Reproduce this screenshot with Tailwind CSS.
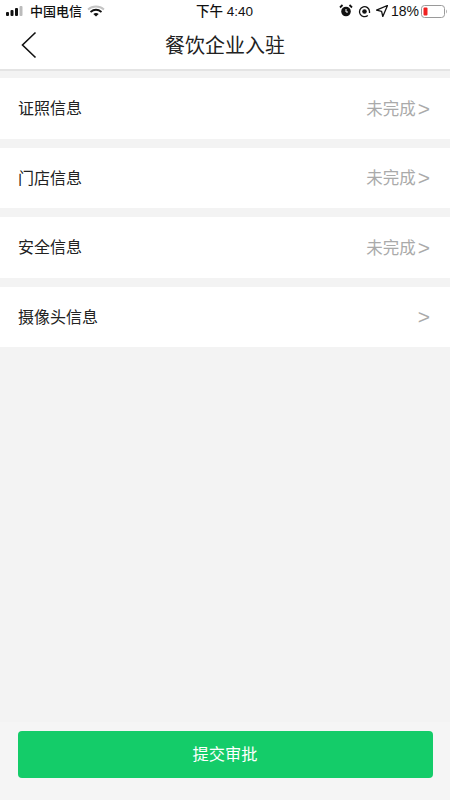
<!DOCTYPE html>
<html lang="zh-CN">
  <head>
    <meta charset="UTF-8" />
    <meta name="viewport" content="width=device-width, initial-scale=1.0" />
    <title>餐饮企业入驻</title>
    <script src="https://cdn.jsdelivr.net/npm/@tailwindcss/browser@4"></script>
  </head>
  <body class="bg-[#f3f3f3] font-['Liberation_Sans','Noto_Sans_CJK_SC',sans-serif]">
    <div class="w-[450px] h-[800px] flex flex-col overflow-hidden">
      <!-- status bar -->
      <div class="h-[22px] bg-white flex items-center justify-between pl-[6px] pr-[2px] text-[13px] leading-none text-[#111] font-medium relative">
        <div class="flex items-center">
          <svg width="20" height="12" viewBox="0 0 20 12">
            <rect x="0" y="7" width="3" height="4" rx="1" fill="#111" />
            <rect x="4.5" y="5" width="3" height="6" rx="1" fill="#111" />
            <rect x="9" y="3" width="3" height="8" rx="1" fill="#111" />
            <rect x="13.5" y="1" width="3" height="10" rx="1" fill="#bbb" />
          </svg>
          <span class="ml-[4px]">中国电信</span>
          <svg width="18" height="12" viewBox="0 0 18 12" class="ml-[5px]">
            <path d="M1 4.5C5.5 0.5 12.5 0.5 17 4.5" fill="none" stroke="#c4c4c4" stroke-width="1.8" />
            <path d="M3.5 7C7 4.2 11 4.2 14.5 7" fill="none" stroke="#111" stroke-width="1.8" />
            <path d="M6.3 9C8 7.8 10 7.8 11.7 9L9 11.6Z" fill="#111" />
          </svg>
        </div>
        <span class="absolute left-[196px] top-[5px] text-[13.5px]">下午 4:40</span>
        <div class="flex items-center">
          <svg width="14" height="14" viewBox="0 0 14 14">
            <circle cx="7" cy="7.5" r="4.8" fill="#111" />
            <path d="M1 3.5L3.5 1M13 3.5L10.5 1" stroke="#111" stroke-width="1.8" />
            <path d="M7 5V8H9" stroke="#fff" stroke-width="1" fill="none" />
          </svg>
          <svg width="13" height="13" viewBox="0 0 13 13" class="ml-[5px]">
            <path d="M9.8 10.4A5 5 0 1 1 11.5 6.5V8" fill="none" stroke="#111" stroke-width="1.3" />
            <circle cx="6.5" cy="6.5" r="2.3" fill="#111" />
          </svg>
          <svg width="12" height="12" viewBox="0 0 12 12" class="ml-[5px]">
            <path d="M11.5 0.5L0.5 5.2L5.6 6.4L6.8 11.5Z" fill="none" stroke="#111" stroke-width="1.3" stroke-linejoin="round" />
          </svg>
          <span class="ml-[3px] text-[14px] font-normal">18%</span>
          <svg width="27" height="13" viewBox="0 0 27 13" class="ml-[2px]">
            <rect x="0.5" y="0.5" width="23" height="12" rx="3" fill="#fff" stroke="#9a9a9a" />
            <rect x="2.5" y="2.5" width="4" height="8" rx="1" fill="#f02020" />
            <path d="M25 4.5C26 5 26 8 25 8.5Z" fill="#9a9a9a" />
          </svg>
        </div>
      </div>

      <!-- nav bar -->
      <div class="h-[49px] bg-white border-b-2 border-[#e4e4e4] flex items-center justify-center relative pt-[1px]">
        <svg width="18" height="28" viewBox="0 0 18 28" class="absolute left-[20px] top-[9px]">
          <path d="M15.5 1.5L2.5 14L15.5 26.5" fill="none" stroke="#111" stroke-width="1.6" />
        </svg>
        <span class="text-[20px] text-[#222]">餐饮企业入驻</span>
      </div>

      <!-- rows -->
      <div class="flex flex-col gap-[9px] pt-[7px]">
        <div class="h-[60.5px] bg-white flex items-center justify-between pl-[18px] pr-[20px] pt-[2px]">
          <span class="text-[16px] text-[#222]">证照信息</span>
          <span class="flex items-center gap-[2px] text-[16.5px] text-[#aaa]">未完成<span class="text-[21px] leading-none pb-[2px]">&gt;</span></span>
        </div>
        <div class="h-[60.5px] bg-white flex items-center justify-between pl-[18px] pr-[20px] pt-[2px]">
          <span class="text-[16px] text-[#222]">门店信息</span>
          <span class="flex items-center gap-[2px] text-[16.5px] text-[#aaa]">未完成<span class="text-[21px] leading-none pb-[2px]">&gt;</span></span>
        </div>
        <div class="h-[60.5px] bg-white flex items-center justify-between pl-[18px] pr-[20px] pt-[2px]">
          <span class="text-[16px] text-[#222]">安全信息</span>
          <span class="flex items-center gap-[2px] text-[16.5px] text-[#aaa]">未完成<span class="text-[21px] leading-none pb-[2px]">&gt;</span></span>
        </div>
        <div class="h-[60.5px] bg-white flex items-center justify-between pl-[18px] pr-[20px] pt-[2px]">
          <span class="text-[16px] text-[#222]">摄像头信息</span>
          <span class="text-[21px] leading-none pb-[2px] text-[#aaa]">&gt;</span>
        </div>
      </div>

      <!-- submit -->
      <div class="mt-auto h-[78px] bg-[#f5f5f5] px-[17.5px] pt-[8.5px]">
        <button class="w-full h-[47.5px] bg-[#14cc69] rounded-[4px] text-white text-[16.25px]">提交审批</button>
      </div>
    </div>
  </body>
</html>
